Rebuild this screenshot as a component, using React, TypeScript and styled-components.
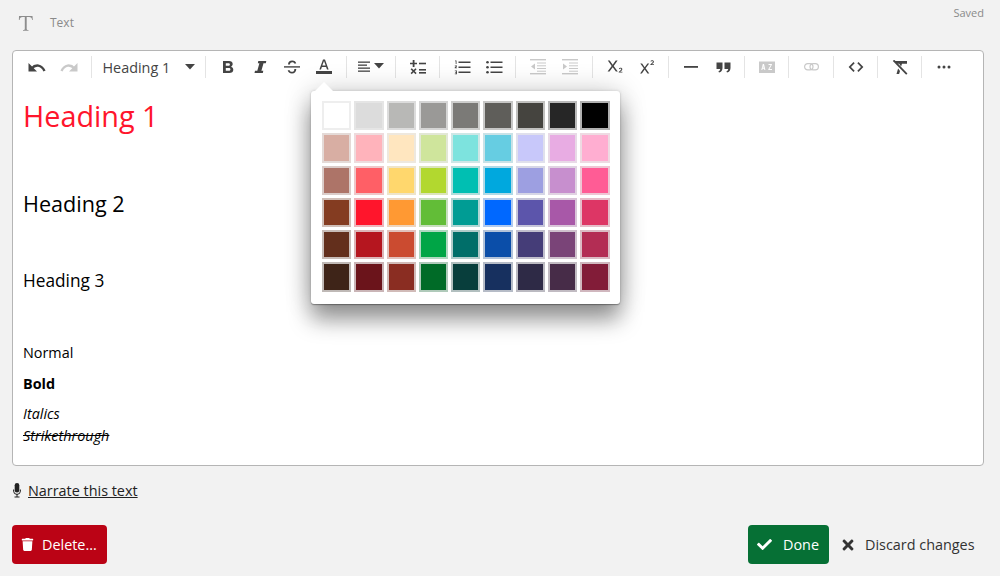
import React from "react";
import styled, { createGlobalStyle } from "styled-components";
import { FaCheck, FaTimes, FaTrash } from "react-icons/fa";

const Global = createGlobalStyle`
  html, body { margin: 0; padding: 0; background: #f2f2f2; }
  body { font-family: "Open Sans", "Liberation Sans", sans-serif; color: #222; overflow: hidden; }
`;

const Page = styled.div`
  width: 1000px;
  height: 576px;
  padding: 0 16px 0 12px;
  box-sizing: border-box;
  display: flex;
  flex-direction: column;
`;

const Header = styled.header`
  height: 50px;
  display: flex;
  align-items: flex-start;
  color: #8a8a8a;
`;

const BlockType = styled.div`
  display: flex;
  align-items: center;
  gap: 16px;
  padding: 14px 0 0 5px;
  font-size: 12px;
  line-height: 18px;
`;

const Saved = styled.span`
  margin-left: auto;
  font-size: 11px;
  line-height: 16px;
  padding-top: 5px;
`;

const Editor = styled.section`
  height: 416px;
  box-sizing: border-box;
  background: #fff;
  border: 1px solid #b5b5b5;
  border-radius: 4px;
  position: relative;
`;

const Toolbar = styled.div`
  height: 32px;
  padding: 0 0 0 8px;
  display: flex;
  align-items: center;
`;

const Group = styled.div`
  height: 22px;
  display: flex;
  align-items: center;
  padding: 0 5.25px 0 6px;
  border-right: 1px solid #e4e4e4;
  &:first-child { padding-left: 0; padding-right: 5.5px; }
  &:last-child { border-right: none; }
`;

const ToolButton = styled.button<{ $off?: boolean; $w?: number }>`
  width: ${(p) => p.$w ?? 32}px;
  height: 22px;
  padding: 0;
  border: none;
  background: none;
  display: flex;
  align-items: center;
  justify-content: center;
  color: ${(p) => (p.$off ? "#c9c9c9" : "#444")};
`;

const StyleSelect = styled.button`
  width: 92px;
  height: 22px;
  margin: 0 5.5px 0 5px;
  padding: 0;
  border: none;
  background: none;
  display: flex;
  align-items: center;
  justify-content: space-between;
  font: 14.4px "Open Sans", sans-serif;
  color: #444;
`;

const Content = styled.div`
  padding: 0 10px;
  color: #000;
`;

const H1 = styled.h1`
  margin: 13px 0 0;
  font-size: 28.8px;
  line-height: 40px;
  font-weight: 400;
  color: #ff152c;
`;

const H2 = styled.h2`
  margin: 52px 0 0;
  font-size: 21.6px;
  line-height: 32px;
  font-weight: 400;
`;

const H3 = styled.h3`
  margin: 49px 0 0;
  font-size: 17.28px;
  line-height: 24px;
  font-weight: 400;
`;

const Para = styled.p<{ $gap: number; $bold?: boolean }>`
  margin: ${(p) => p.$gap}px 0 0;
  font-size: 14.4px;
  line-height: 20px;
  font-weight: ${(p) => (p.$bold ? 700 : 400)};
`;

const Italic = styled.em`
  display: block;
  margin-top: 10px;
  font-size: 14.4px;
  line-height: 20px;
`;

const Strike = styled.em`
  display: block;
  margin-top: 2px;
  font-size: 14.4px;
  line-height: 20px;
  text-decoration: line-through;
`;

const Popup = styled.div`
  position: absolute;
  left: 298px;
  top: 39.5px;
  width: 309px;
  height: 213px;
  box-sizing: border-box;
  padding: 10.5px 10.5px 0 11px;
  background: #fff;
  border-radius: 3px;
  box-shadow: 0 1px 1px rgba(0, 0, 0, 0.3), 0 0 3px rgba(0, 0, 0, 0.15), 0 16px 22px rgba(0, 0, 0, 0.38), 0 0 28px rgba(0, 0, 0, 0.2);
  &::before {
    content: "";
    position: absolute;
    left: 4px;
    top: -9px;
    border-left: 9px solid transparent;
    border-right: 9px solid transparent;
    border-bottom: 9px solid #fff;
  }
`;

const Palette = styled.div`
  display: grid;
  grid-template-columns: repeat(9, 1fr);
  gap: 3px;
`;

const Swatch = styled.div<{ $c: string }>`
  aspect-ratio: 1;
  box-sizing: border-box;
  border: 2px solid color-mix(in srgb, ${(p) => p.$c} 24%, #e8e8e8);
  background: ${(p) => p.$c};
  background-clip: padding-box;
`;

const NarrateRow = styled.div`
  height: 48px;
  display: flex;
  align-items: center;
  gap: 7px;
  font-size: 14.4px;
  color: #222;
  svg { margin-left: 1px; }
`;

const NarrateLink = styled.a`
  text-decoration: underline;
  color: #222;
`;

const Footer = styled.footer`
  margin-top: 11px;
  display: flex;
  align-items: center;
`;

const ActionButton = styled.button<{ $bg: string; $w: number; $gap: number }>`
  width: ${(p) => p.$w}px;
  height: 39px;
  border: none;
  border-radius: 4px;
  background: ${(p) => p.$bg};
  color: #fff;
  display: flex;
  align-items: center;
  gap: ${(p) => p.$gap}px;
  padding: 0 0 0 9px;
  font: 14.4px "Open Sans", sans-serif;
`;

const Discard = styled.button`
  margin-left: 11px;
  width: 144px;
  padding: 0;
  border: none;
  background: none;
  color: #333;
  display: flex;
  align-items: center;
  gap: 9px;
  font: 14.4px "Open Sans", sans-serif;
`;

const Spacer = styled.div`
  flex: 1;
`;

const colors = [
  ["#ffffff", "#dcdcdc", "#b8b8b6", "#9a9997", "#7b7a77", "#5f5e5a", "#45443f", "#262626", "#000000"],
  ["#d8aea3", "#ffb3bb", "#ffe6bf", "#cfe59c", "#7de3de", "#66cde2", "#c8c8fa", "#e8ace3", "#ffaed1"],
  ["#ad7468", "#ff5f66", "#ffd76d", "#b2d82f", "#00bfb2", "#00a8de", "#9d9fe1", "#c78fce", "#ff5c95"],
  ["#843c21", "#ff152c", "#ff9933", "#62bd37", "#009c94", "#0068ff", "#5c55ab", "#a858a8", "#dd3665"],
  ["#632f1c", "#b5161f", "#cb4b30", "#00a546", "#006e69", "#0b4ea9", "#453d78", "#7a4478", "#b32d54"],
  ["#3e2418", "#6b141b", "#8a2d22", "#006b27", "#083e3c", "#17305f", "#2e2a46", "#472c48", "#821c38"],
];

type IconProps = { children: React.ReactNode; w?: number; h?: number };
const Ico = ({ children, w = 20, h = 20 }: IconProps) => (
  <svg width={w} height={h} viewBox={`0 0 ${w} ${h}`} fill="currentColor" aria-hidden="true">
    {children}
  </svg>
);

const Caret = () => (
  <Ico w={10} h={6}>
    <path d="M0 0h10L5 5.5z" />
  </Ico>
);

const Lines = ({ x, ys, w = 10, t = 1.5 }: { x: number; ys: number[]; w?: number; t?: number }) => (
  <>
    {ys.map((y) => (
      <rect key={y} x={x} y={y} width={w} height={t} />
    ))}
  </>
);

const Undo = () => (
  <Ico>
    <path d="M1.500 6v8.500h8.500z" />
    <path d="M4.500 11.500C8.500 7 14.500 7.500 17.500 14" fill="none" stroke="currentColor" strokeWidth="2.400" />
  </Ico>
);
const Redo = () => (
  <Ico>
    <path d="M18.500 6v8.500H10z" />
    <path d="M15.500 11.500C11.500 7 5.500 7.500 2.500 14" fill="none" stroke="currentColor" strokeWidth="2.400" />
  </Ico>
);

export default function App() {
  return (
    <Page>
      <Global />
      <Header>
        <BlockType>
          <Ico w={17} h={18}>
            <path d="M2 2h13.500l.3 4h-.7c-.3-2-1-2.900-3-2.900H9.700v11.600c0 .9.300 1.200 1.800 1.300v.7H6v-.7c1.500-.1 1.800-.4 1.800-1.300V3.100H5.600c-2 0-2.700.9-3 2.900h-.7z" fill="#8d8d8d" />
          </Ico>
          Text
        </BlockType>
        <Saved>Saved</Saved>
      </Header>
      <Editor>
        <Toolbar>
          <Group>
            <ToolButton><Undo /></ToolButton>
            <ToolButton $off><Redo /></ToolButton>
          </Group>
          <Group>
            <StyleSelect>
              Heading 1
              <Caret />
            </StyleSelect>
          </Group>
          <Group>
            <ToolButton>
              <Ico w={14} h={16}>
                <path d="M2 2h6c2.300 0 3.700 1.200 3.700 3.100 0 1.200-.7 2.200-1.700 2.600 1.400.4 2.300 1.500 2.300 3 0 2.100-1.600 3.300-4 3.300H2zm2.800 2.200v2.600h2.600c.9 0 1.500-.5 1.500-1.300s-.6-1.300-1.500-1.300zm0 4.800v2.800h3c1 0 1.600-.5 1.600-1.400S8.800 9 7.800 9z" />
              </Ico>
            </ToolButton>
            <ToolButton>
              <Ico w={14} h={16}>
                <path d="M5.300 2h8l-.5 2.200h-2.300L8.400 11.800h1.900L9.800 14H1.500L2 11.800h2.300l2.100-7.600H4.800z" />
              </Ico>
            </ToolButton>
            <ToolButton>
              <Ico w={18} h={18}>
                <path d="M1 8.200h16v1.400H1z" />
                <path d="M5 6.500C5 4 6.700 2.500 9.200 2.500c2.200 0 3.700 1.100 4 3h-2c-.2-.8-.9-1.300-2-1.300-1.300 0-2.100.7-2.100 1.900v.4zM13.300 11c0 2.700-1.700 4.500-4.300 4.500-2.400 0-4-1.200-4.300-3.200h2c.2 1 1 1.500 2.300 1.500 1.400 0 2.300-.9 2.300-2.300V11z" />
              </Ico>
            </ToolButton>
            <ToolButton>
              <Ico w={18} h={18}>
                <path d="M8 1.500h2l3.600 10h-1.600l-.9-2.600H6.900L6 11.500H4.400zm-.7 6h3.400L9 2.900z" />
                <rect x="1" y="13" width="16" height="3" />
              </Ico>
            </ToolButton>
          </Group>
          <Group>
            <ToolButton $w={37}>
              <Ico w={26} h={14}>
                <Lines x={0} ys={[1.500, 7.500, 10.500]} w={12} t={1.300} />
                <Lines x={0} ys={[4.500]} w={9} t={1.300} />
                <path d="M16 3h10l-5 5.500z" />
              </Ico>
            </ToolButton>
          </Group>
          <Group>
            <ToolButton>
              <Ico w={16} h={16}>
                <path d="M2.700 1h1.800v2.700H7v1.600H4.500V8H2.700V5.300H0V3.700h2.700z" />
                <rect x="9" y="3.700" width="7" height="1.600" />
                <path d="m.6 10.300 1.100-1.100 1.900 1.900 1.900-1.900 1.100 1.100-1.900 1.900 1.900 1.900-1.100 1.100-1.900-1.900-1.900 1.900-1.100-1.100 1.900-1.900z" />
                <rect x="9" y="10" width="7" height="1.600" />
                <rect x="9" y="13" width="7" height="1.600" />
              </Ico>
            </ToolButton>
          </Group>
          <Group>
            <ToolButton>
              <Ico w={17} h={15}>
                <Lines x={4.500} ys={[1.500, 6.500, 11.500]} w={12} t={1.500} />
                <path d="M1 .5h1.500v3.500h-.8V1.300H1zM.8 5.500H3v.8L1.800 7.500H3v.7H.7v-.7L2 6.200H.8zM.8 10.500H3v3.700H.8v-.7h1.400v-.8H1.200v-.6h1v-.8H.8z" />
              </Ico>
            </ToolButton>
            <ToolButton>
              <Ico w={17} h={15}>
                <Lines x={4.500} ys={[1.500, 6.500, 11.500]} w={12} t={1.500} />
                <circle cx="1.500" cy="2.200" r="1.300" />
                <circle cx="1.500" cy="7.200" r="1.300" />
                <circle cx="1.500" cy="12.200" r="1.300" />
              </Ico>
            </ToolButton>
          </Group>
          <Group>
            <ToolButton $off>
              <Ico w={16} h={16}>
                <Lines x={0} ys={[0, 14]} w={16} t={1.400} />
                <Lines x={7} ys={[3.500, 6.300, 9, 11.700]} w={9} t={1} />
                <path d="M5 4.500v6L1 7.500z" />
              </Ico>
            </ToolButton>
            <ToolButton $off>
              <Ico w={16} h={16}>
                <Lines x={0} ys={[0, 14]} w={16} t={1.400} />
                <Lines x={7} ys={[3.500, 6.300, 9, 11.700]} w={9} t={1} />
                <path d="M1 4.500v6l4-3z" />
              </Ico>
            </ToolButton>
          </Group>
          <Group>
            <ToolButton>
              <Ico w={18} h={16}>
                <path d="M1.800 1.500h1.900l3 4.300 3-4.300h1.900L7.700 7l4.100 5.500H9.900L6.700 8.200 3.500 12.500H1.600L5.700 7z" />
                <path d="M12.900 9.800c.3-.7 1-1 1.700-1 1 0 1.700.6 1.700 1.400 0 .8-.6 1.300-1.200 1.800l-1 .8h2.300v.8h-3.700v-.7l1.600-1.300c.6-.5 1-.9 1-1.300 0-.5-.3-.7-.8-.7-.4 0-.8.200-1 .6z" />
              </Ico>
            </ToolButton>
            <ToolButton>
              <Ico w={18} h={16}>
                <path d="M2.300 4.500h1.800l2.600 3.700 2.700-3.700h1.800L7.600 9.200l3.700 5.300H9.500l-2.800-4-2.800 4H2.100l3.700-5.300z" />
                <path d="M12.500 2.300c.3-.7 1-1 1.700-1 1 0 1.700.6 1.700 1.400 0 .8-.6 1.300-1.200 1.800l-1 .8h2.300v.8h-3.700v-.7l1.600-1.300c.6-.5 1-.9 1-1.300 0-.5-.3-.7-.8-.7-.4 0-.8.200-1 .6z" />
              </Ico>
            </ToolButton>
          </Group>
          <Group>
            <ToolButton>
              <Ico w={14} h={4}>
                <rect x="0" y="1" width="14" height="1.800" />
              </Ico>
            </ToolButton>
            <ToolButton>
              <Ico w={16} h={11}>
                <path d="M1.500 .5h6v5.500C7.500 8.300 6.300 10 4 10.500l-.6-1.200C4.500 9 5.100 8.300 5.200 7H1.500zM9.500 .5h6v5.500c0 2.300-1.200 4-3.500 4.500l-.6-1.200c1.100-.3 1.700-1 1.800-2.300H9.500z" />
              </Ico>
            </ToolButton>
          </Group>
          <Group>
            <ToolButton $off>
              <Ico w={16} h={13}>
                <path fillRule="evenodd" d="M0 .5h16V12H0zM3.800 3 2.300 9h1l.3-1.200h1.500L5.400 9h1L5 3zm.2 1.300.5 2.600H3.800zM9.500 3v.9h2.200L9.300 8.200V9h3.700v-.9h-2.500l2.400-4.300V3z" />
              </Ico>
            </ToolButton>
          </Group>
          <Group>
            <ToolButton $off>
              <Ico w={15} h={8}>
                <rect x=".6" y=".6" width="8.400" height="6.300" rx="3.100" fill="none" stroke="currentColor" strokeWidth="1.200" />
                <rect x="6" y=".6" width="8.400" height="6.300" rx="3.100" fill="none" stroke="currentColor" strokeWidth="1.200" />
              </Ico>
            </ToolButton>
          </Group>
          <Group>
            <ToolButton>
              <Ico w={16} h={12}>
                <path d="M5.500 1 6.700 2.300 3 6l3.700 3.700L5.500 11 .6 6zM10.500 1 9.300 2.300 13 6l-3.700 3.700 1.200 1.300L15.400 6z" />
              </Ico>
            </ToolButton>
          </Group>
          <Group>
            <ToolButton>
              <Ico w={16} h={15}>
                <path d="M1.500 1h13.500v2.800H10l-.9 2.700-1.900-2.700H4.500zM6.100 8.500 8 11l-.9 3H4.500z" />
                <path d="M1.500.3 14.800 14.200" fill="none" stroke="currentColor" strokeWidth="1.800" />
              </Ico>
            </ToolButton>
          </Group>
          <Group>
            <ToolButton>
              <Ico w={14} h={4}>
                <circle cx="2" cy="2" r="1.500" />
                <circle cx="7" cy="2" r="1.500" />
                <circle cx="12" cy="2" r="1.500" />
              </Ico>
            </ToolButton>
          </Group>
        </Toolbar>
        <Content>
          <H1>Heading 1</H1>
          <H2>Heading 2</H2>
          <H3>Heading 3</H3>
          <Para $gap={50}>Normal</Para>
          <Para $gap={11} $bold>Bold</Para>
          <Italic>Italics</Italic>
          <Strike>Strikethrough</Strike>
        </Content>
        <Popup>
          <Palette>
            {colors.flat().map((c, i) => (
              <Swatch key={i} $c={c} />
            ))}
          </Palette>
        </Popup>
      </Editor>
      <NarrateRow>
        <Ico w={8} h={15}>
          <rect x="1.700" y="0" width="4.600" height="9.500" rx="2.300" />
          <path d="M.6 6.500V8a3.400 3.400 0 0 0 6.800 0V6.500" fill="none" stroke="currentColor" strokeWidth="1" />
          <path d="M3.500 11h1v2.500H6.500v1h-5v-1h2z" />
        </Ico>
        <NarrateLink>Narrate this text</NarrateLink>
      </NarrateRow>
      <Footer>
        <ActionButton $bg="#bb0315" $w={95} $gap={8}>
          <FaTrash size={13} />
          Delete...
        </ActionButton>
        <Spacer />
        <ActionButton $bg="#067035" $w={81} $gap={11}>
          <FaCheck size={15} />
          Done
        </ActionButton>
        <Discard>
          <FaTimes size={16} />
          Discard changes
        </Discard>
      </Footer>
    </Page>
  );
}
